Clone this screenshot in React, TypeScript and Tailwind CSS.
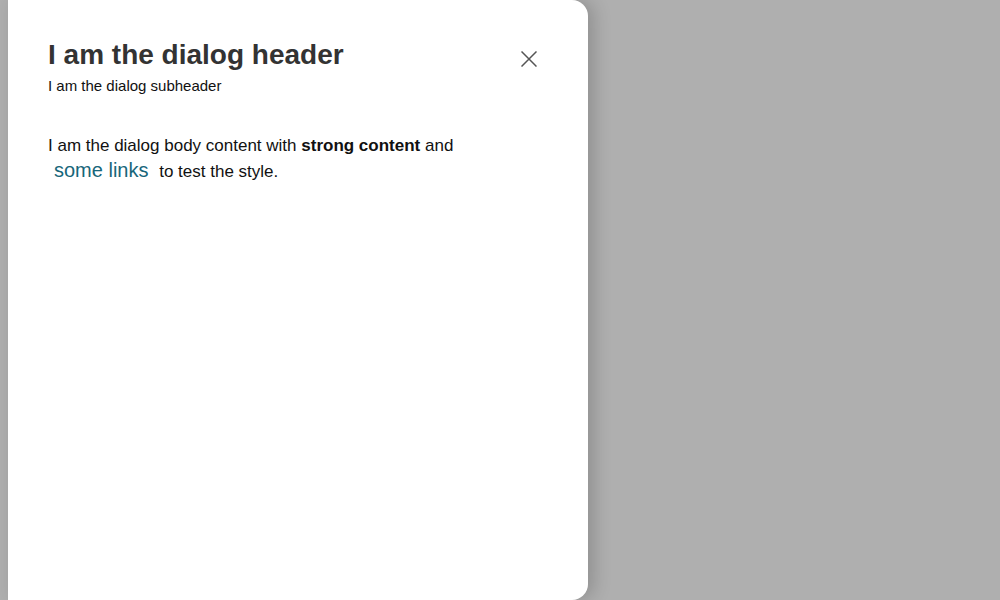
export default function App() {
  return (
    <div
      className="flex h-[600px] w-[1000px] overflow-hidden bg-[#afafaf] pl-2"
      style={{ fontFamily: '"Liberation Sans", Arial, sans-serif' }}
    >
      <div className="flex h-[600px] w-[580px] flex-col rounded-r-2xl bg-white px-10 pt-[38px] shadow-[6px_0_18px_rgba(0,0,0,0.18)]">
        <div className="flex items-start justify-between">
          <div>
            <h2 className="text-[28px] font-bold leading-[34px] text-[#333333]">I am the dialog header</h2>
            <p className="mt-[4px] text-[15px] leading-[20px] text-[#111111]">I am the dialog subheader</p>
          </div>
          <button type="button" className="mr-[11px] mt-[13px] text-[#555555]" aria-label="Close">
            <svg width="16" height="16" viewBox="0 0 16 16" fill="none" stroke="currentColor" strokeWidth="1.5">
              <path d="M0.5 0.5 L15.5 15.5 M15.5 0.5 L0.5 15.5" />
            </svg>
          </button>
        </div>
        <p className="mt-[38px] max-w-[420px] text-[17px] leading-[24px] text-[#111111]">
          I am the dialog body content with <strong className="font-bold">strong content</strong> and{" "}
          <a href="#" className="mx-[6px] text-[20px] text-[#17667a]">some links</a> to test the style.
        </p>
      </div>
    </div>
  );
}
